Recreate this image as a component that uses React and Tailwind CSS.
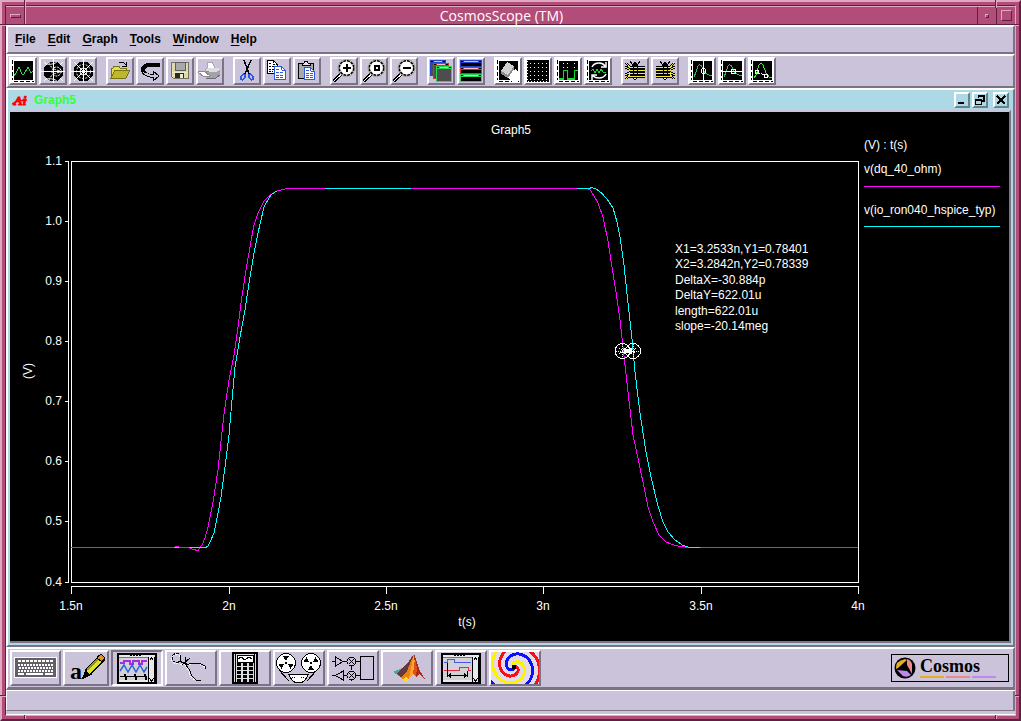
import clsx from 'clsx'

const sans = "font-['Liberation_Sans',Arial,sans-serif]"

const raised = 'border-2 border-t-white border-l-white border-r-[#7b7385] border-b-[#7b7385]'
const sunken = 'border-2 border-t-[#7b7385] border-l-[#7b7385] border-r-white border-b-white'

function Icon({ w = 24, h = 24, children }) {
  return (
    <svg width={w} height={h} viewBox={`0 0 ${w} ${h}`} fill="none" shapeRendering="crispEdges" aria-hidden="true">
      {children}
    </svg>
  )
}

function ScopeFrame({ children }) {
  return (
    <Icon>
      <rect width="24" height="24" fill="#fff" />
      <path d="M1.5 1V21" stroke="#000" strokeDasharray="4 2" />
      <path d="M3 22.5H23" stroke="#000" strokeDasharray="4 2" />
      <rect x="3" y="2" width="19" height="19" fill="#000" />
      {children}
    </Icon>
  )
}

function Polar({ dense }) {
  return (
    <Icon>
      <circle cx="12.5" cy="12.5" r="10" fill="#000" />
      <path d="M12.5 0V24M0 12.5H24" stroke="#fff" />
      {dense ? (
        <g shapeRendering="auto">
          <circle cx="12.500" cy="12.500" r="3.500" stroke="#fff" />
          <circle cx="12.500" cy="12.500" r="7" stroke="#fff" strokeDasharray="2 1.500" />
          <path d="M5 5L20 20M20 5L5 20" stroke="#fff" />
        </g>
      ) : (
        <g shapeRendering="auto">
          <circle cx="15.500" cy="12.500" r="4.500" stroke="#fff" strokeDasharray="2 1" />
          <path d="M5 5Q12 6 16 3M5 20Q12 19 16 22M8 3Q9 11 21 12M8 22Q9 14 21 13" stroke="#fff" strokeDasharray="3 1" />
        </g>
      )}
      <path d="M3 3L6 6M22 3L19 6M3 22L6 19M22 22L19 19" stroke="#fff" />
    </Icon>
  )
}

function Magnifier({ children }) {
  return (
    <Icon>
      <path d="M11 13L1.500 22.500" stroke="#000" strokeWidth="4" />
      <path d="M10 14.500L2 22" stroke="#fff" strokeWidth="1" />
      <g shapeRendering="auto">
        <circle cx="14.500" cy="9" r="8.500" fill="#fff" stroke="#a5a09a" />
        <circle cx="14.500" cy="9" r="7.200" fill="#fff" stroke="#000" strokeWidth="1.500" strokeDasharray="3 0.800" />
      </g>
      {children}
    </Icon>
  )
}

function MiniWindow({ x, y, w, h, color, fill }) {
  return (
    <g>
      <rect x={x} y={y} width={w} height={h} fill={color} />
      <path d={`M${x + 4} ${y + 1.5}H${x + w - 4}`} stroke="#fff" strokeOpacity="0.7" />
      <path d={`M${x + 1} ${y + 1.5}h2M${x + w - 3} ${y + 1.5}h2`} stroke="#000" />
      <rect x={x + 1} y={y + 3} width={w - 2} height={h - 4} fill={fill} />
    </g>
  )
}

function Bug({ flip }) {
  const fan = flip
    ? 'M17 8.500L21 4M17 10.500L22 8M17 13.500L22 16M17 15.500L21 20'
    : 'M7 8.500L3 4M7 10.500L2 8M7 13.500L2 16M7 15.500L3 20'
  const wires = flip ? 'M3 8.500H18M3 11.500H18M3 14.500H18M3 17.500H18' : 'M6 8.500H22M6 11.500H22M6 14.500H22M6 17.500H22'
  return (
    <Icon>
      <path d="M9 5L7 2M15 5L17 2M10 4H14" stroke="#000" />
      <ellipse cx="12" cy="12" rx="4" ry="9" fill="#000" />
      <rect x="11" y="18" width="2" height="2" fill="#fff" />
      <path d={wires} stroke="#000" strokeWidth="3" />
      <path d={fan} stroke="#000" strokeWidth="2.500" />
      <path d={wires} stroke="#f0e63c" />
      <path d={fan} stroke="#f0e63c" />
      <path d="M10.500 8V17M14.500 8V17" stroke="#000" strokeDasharray="1 2" />
    </Icon>
  )
}

const gridDots = [4, 8, 12, 16, 20]

const toolGroups = [
  [
    {
      label: 'New graph',
      icon: (
        <ScopeFrame>
          <path d="M3 17L5 14L8 8L11 15L13 15L17 8L20 14L22 12" stroke="#2fd35a" />
        </ScopeFrame>
      ),
    },
    { label: 'Smith chart', icon: <Polar /> },
    { label: 'Polar chart', icon: <Polar dense /> },
  ],
  [
    {
      label: 'Open',
      icon: (
        <Icon>
          <path d="M3 19V9H5L6 7H11L12 9H18V12" fill="#e3df4a" stroke="#777315" />
          <path d="M3 19L7 11H22L18 19Z" fill="#bdb92b" stroke="#777315" />
          <path d="M11 3H15L18 6M18 3V7H14" stroke="#000" />
        </Icon>
      ),
    },
    {
      label: 'Undo',
      icon: (
        <Icon>
          <path d="M22 4H10Q3 5 3 11Q4 17 11 18V14Q7 13 7 11Q8 8 12 8H22Z" fill="#000" />
          <path d="M4 13Q6 17 12 18H15V22L21 17L15 12V15H12" fill="#cbc3d9" stroke="#000" />
        </Icon>
      ),
    },
    {
      label: 'Save',
      icon: (
        <Icon>
          <path d="M3 3H20V19H5L3 17Z" fill="#dedab0" stroke="#75725f" />
          <rect x="7" y="3" width="10" height="8" fill="#a9a8aa" stroke="#5f5d5f" />
          <path d="M4 13H20M4 16H8" stroke="#efedc0" />
          <rect x="7" y="14" width="9" height="5" fill="#2a2a25" />
          <rect x="12" y="15" width="3" height="4" fill="#eceadb" />
        </Icon>
      ),
    },
    {
      label: 'Print',
      icon: (
        <Icon>
          <path d="M10 10L9 4L14 3L17 9" fill="#fff" stroke="#aaa6b0" />
          <path d="M8 9H20L22 11V16L18 19H9L7 15V11Z" fill="#a3a2a6" />
          <path d="M7 11L9 9H20L22 11L18 13H9Z" fill="#dddce0" />
          <path d="M8 19H18L22 16" stroke="#6e6a70" />
          <path d="M0 13L6 12L12 17L6 18Z" fill="#fff" stroke="#8b888f" />
          <rect x="8" y="12" width="3" height="1" fill="#36ba68" />
        </Icon>
      ),
    },
  ],
  [
    {
      label: 'Cut',
      icon: (
        <Icon>
          <path d="M9 1L14 15M16 1L10 15" stroke="#000" strokeWidth="1.500" />
          <ellipse cx="8" cy="18" rx="2" ry="3" transform="rotate(30 8 18)" stroke="#2c59e0" strokeWidth="1.500" />
          <ellipse cx="16" cy="18" rx="2" ry="3" transform="rotate(-30 16 18)" stroke="#2c59e0" strokeWidth="1.500" />
        </Icon>
      ),
    },
    {
      label: 'Copy',
      icon: (
        <Icon>
          <path d="M2.500 1.500H8.500L12.500 5.500V14.500H2.500Z" fill="#fff" stroke="#000" />
          <path d="M8.500 2V5.500H12M4 4.500H7M4 7.500H11M4 10.500H11M4 12.500H8" stroke="#000" strokeDasharray="2 1" />
          <path d="M9.500 7.500H16.500L20.500 11.500V20.500H9.500Z" fill="#fff" stroke="#2c59e0" />
          <path d="M16.500 8V11.500H20M11 10.500H15M11 13.500H19M11 16.500H19M11 18.500H19" stroke="#2c59e0" strokeDasharray="3 1" />
        </Icon>
      ),
    },
    {
      label: 'Paste',
      icon: (
        <Icon>
          <rect x="3.500" y="4.500" width="15" height="15" rx="1" fill="#aaa8ac" stroke="#000" />
          <path d="M7 6V4H9L10 2H12L13 4H15V6Z" fill="#e8e5e5" stroke="#000" />
          <path d="M9.500 8.500H15.500L19.500 12.500V20.500H9.500Z" fill="#fff" stroke="#2c59e0" />
          <path d="M15.500 9V12.500H19M11 11.500H14M11 14.500H18M11 16.500H18M11 18.500H18" stroke="#2c59e0" strokeDasharray="3 1" />
        </Icon>
      ),
    },
  ],
  [
    {
      label: 'Zoom in',
      icon: (
        <Magnifier>
          <path d="M15 5V13M11 9H19" stroke="#000" strokeWidth="2" />
        </Magnifier>
      ),
    },
    {
      label: 'Zoom fit',
      icon: (
        <Magnifier>
          <rect x="13" y="7" width="4" height="4" stroke="#000" strokeWidth="2" />
        </Magnifier>
      ),
    },
    {
      label: 'Zoom out',
      icon: (
        <Magnifier>
          <path d="M11 9H19" stroke="#000" strokeWidth="2" />
        </Magnifier>
      ),
    },
  ],
  [
    {
      label: 'Cascade',
      icon: (
        <Icon>
          <MiniWindow x={1} y={1} w={16} h={16} color="#2343c5" fill="#4d4d4d" />
          <MiniWindow x={4} y={4} w={16} h={16} color="#e22a2a" fill="#4d4d4d" />
          <MiniWindow x={7} y={7} w={16} h={16} color="#22dc50" fill="#4d4d4d" />
        </Icon>
      ),
    },
    {
      label: 'Tile',
      icon: (
        <Icon>
          <MiniWindow x={1} y={1} w={22} h={7} color="#2343c5" fill="#000" />
          <MiniWindow x={1} y={8} w={22} h={7} color="#e22a2a" fill="#000" />
          <MiniWindow x={1} y={15} w={22} h={8} color="#22dc50" fill="#000" />
        </Icon>
      ),
    },
  ],
  [
    {
      label: 'Clear graph',
      icon: (
        <ScopeFrame>
          <path d="M14 13L20 10L22 13V23H16L11 17Z" fill="#fff" />
          <path d="M5 12L11 3L18 7L12 16Z" fill="#cfcfcf" />
          <path d="M5 12L12 16V19L5 15ZM18 7V10L12 19V16Z" fill="#8c8c8c" />
        </ScopeFrame>
      ),
    },
    {
      label: 'Grid',
      icon: (
        <Icon>
          <rect width="24" height="24" fill="#fff" />
          <rect x="1" y="1" width="22" height="22" fill="#000" />
          {gridDots.map((y) => gridDots.map((x) => <rect key={`${x}-${y}`} x={x} y={y} width="1" height="1" fill="#fff" />))}
          <path d="M1.500 2V22M2 22.500H22" stroke="#fff" strokeDasharray="1 2" />
        </Icon>
      ),
    },
    {
      label: 'Digital',
      icon: (
        <ScopeFrame>
          <path d="M3 19.500H7.500V11.500H11.500V19.500H18.500V11.500H22" stroke="#10dd28" />
          <path d="M3 19.500H8M11 19.500H19" stroke="#10dd28" strokeWidth="2" />
          <path d="M7.500 4V9M11.500 4V9M18.500 4V9" stroke="#fff" strokeDasharray="1 3" />
        </ScopeFrame>
      ),
    },
    {
      label: 'Refresh',
      icon: (
        <ScopeFrame>
          <path
            d="M6 8Q8 4 13 4Q17 4 19 7M20 3V8H15M20 15Q18 19 13 19Q9 19 7 17M6 21V16H11"
            stroke="#fff"
            strokeWidth="1.500"
            shapeRendering="auto"
          />
          <path d="M5 12L7 10L9 14L11 10L13 14L15 10L17 13H20" stroke="#10dd28" />
        </ScopeFrame>
      ),
    },
  ],
  [
    { label: 'Bus', icon: <Bug /> },
    { label: 'Split bus', icon: <Bug flip /> },
  ],
  [
    {
      label: 'Vertical marker',
      icon: (
        <ScopeFrame>
          <path d="M4 18L6 13L8 7Q10 4 12 8L15 14L19 16H22" stroke="#22c84a" />
          <path d="M13.500 2V21" stroke="#fff" />
          <circle cx="13.500" cy="12" r="2.500" stroke="#fff" />
        </ScopeFrame>
      ),
    },
    {
      label: 'Horizontal marker',
      icon: (
        <ScopeFrame>
          <path d="M4 18L6 13L8 7Q10 4 12 8L15 14L19 16H22" stroke="#22c84a" />
          <path d="M3 12.500H22" stroke="#fff" />
          <circle cx="13.500" cy="12.500" r="2.500" stroke="#fff" />
        </ScopeFrame>
      ),
    },
    {
      label: 'Two point marker',
      icon: (
        <ScopeFrame>
          <path d="M4 19L6 16L9 6L11 4L13 6L16 14L19 18H22" stroke="#3ef028" />
          <path d="M7 13L16 17" stroke="#fff" strokeDasharray="1 1" />
          <circle cx="7" cy="13" r="2" stroke="#fff" />
          <circle cx="16" cy="17" r="2" stroke="#fff" />
        </ScopeFrame>
      ),
    },
  ],
]

// one arm of the swirl, r0 is its radius due left of the centre
function swirlArm(r0) {
  const pts = []
  for (let r = 1; r <= 36; r += 0.5) {
    const a = ((180 + (r0 - r) * 16) * Math.PI) / 180
    pts.push(`${(23 + r * Math.cos(a)).toFixed(1)},${(15 - r * Math.sin(a)).toFixed(1)}`)
  }
  return pts.join(' ')
}

function ScopeCase({ children }) {
  return (
    <>
      <rect x="5" y="2" width="38" height="29" fill="#e9e9ec" stroke="#000" strokeWidth="2" />
      <path d="M6 5.500H35" stroke="#777" />
      <path d="M17 3.500H28" stroke="#000" strokeDasharray="2 1" />
      <rect x="6" y="6" width="29" height="22" fill="#d2d2d6" />
      <path d="M35.500 5V30M41.500 5V30" stroke="#000" />
      <path d="M36.500 8.500L38.500 6L40.500 8.500M36.500 26.500L38.500 29L40.500 26.500" stroke="#000" />
      {children}
    </>
  )
}

function Reel({ cx, turn }) {
  return (
    <g>
      <circle cx={cx} cy="11" r="9.500" fill="#fff" stroke="#000" />
      <g transform={`rotate(${turn} ${cx} 11)`} fill="#000">
        <path d={`M${cx} 9L${cx - 3} 4H${cx + 3}Z`} />
        <path d={`M${cx} 9L${cx - 3} 4H${cx + 3}Z`} transform={`rotate(120 ${cx} 11)`} />
        <path d={`M${cx} 9L${cx - 3} 4H${cx + 3}Z`} transform={`rotate(240 ${cx} 11)`} />
      </g>
      <rect x={cx - 1} y="10" width="2" height="2" fill="#000" />
    </g>
  )
}

const apps = [
  {
    label: 'Command line',
    width: 'w-[51px]',
    w: 47,
    icon: (
      <>
        <rect x="2.500" y="5.500" width="42" height="20" fill="#626066" stroke="#fff" />
        <path d="M6 8.500H41" stroke="#fff" strokeWidth="2" strokeDasharray="3 1" />
        <path d="M6 12.500H41M7 15.500H41M6 18.500H41" stroke="#fff" strokeWidth="2" strokeDasharray="2 1" />
        <path d="M6 21.500H12M14 21.500H31M33 21.500H41" stroke="#fff" strokeWidth="2" />
      </>
    ),
  },
  {
    label: 'Draw',
    width: 'w-[46px]',
    w: 42,
    icon: (
      <>
        <text x="5" y="27" fill="#000" className="font-['Liberation_Serif',serif] text-[24px] font-bold">
          a
        </text>
        <path d="M18 26L21 18L34 4L39 8L26 22Z" fill="#dce02c" stroke="#000" strokeWidth="1.500" />
        <path d="M22 18L35 5" stroke="#8c9320" strokeWidth="2" />
        <path d="M18 26L21 19L25 22Z" fill="#000" />
        <path d="M32 6L36 2L40 6L37 10Z" fill="#df922a" stroke="#000" />
      </>
    ),
  },
  {
    label: 'Scope',
    width: 'w-[52px]',
    w: 48,
    active: true,
    icon: (
      <ScopeCase>
        <path d="M7 10.500H11V8.500H17V11.500H20V8.500H26V11.500H29V8.500H34" stroke="#a52be5" strokeWidth="2" />
        <path
          d="M7 19L11 13L15 20L19 13L23 20L27 13L31 20L34 15"
          stroke="#2864df"
          strokeWidth="1.500"
          shapeRendering="auto"
        />
        <path d="M7 24.500H11L12 22L13 28L14 24.500H21L22 22L23 28L24 24.500H31L32 22L33 28L34 24.500" stroke="#000" />
      </ScopeCase>
    ),
  },
  {
    label: 'Macro',
    width: 'w-[52px]',
    w: 48,
    icon: (
      <>
        <g stroke="#fff" strokeDasharray="3 1">
          <circle cx="9" cy="7" r="4.500" />
          <path d="M13 12H24L32 11L39 16M18 13L21 18L24 25L29 29" />
        </g>
        <circle cx="9.500" cy="6" r="4.500" stroke="#000" strokeDasharray="3 1" />
        <path d="M12 9L22 13M15 13L23 6M18 5V11M22 11H32L38 14L39 17" stroke="#000" />
        <path d="M18 12L22 17L25 24L29 28H34" stroke="#000" />
      </>
    ),
  },
  {
    label: 'Calculator',
    width: 'w-[52px]',
    w: 48,
    icon: (
      <>
        <rect x="12" y="1" width="24" height="30" fill="#dcdcdf" stroke="#000" strokeWidth="2" />
        <path d="M14.500 2V31M33.500 2V31" stroke="#000" />
        <rect x="16" y="3" width="16" height="7" fill="#fff" stroke="#000" />
        <path d="M17 7L20 5L24 8L28 5L31 7" stroke="#000" />
        {[12, 16, 20, 24, 28].map((y) => (
          <path key={y} d={`M16 ${y + 0.5}H20M22 ${y + 0.5}H26M28 ${y + 0.5}H32`} stroke="#000" strokeWidth="3" />
        ))}
      </>
    ),
  },
  {
    label: 'Measure',
    width: 'w-[52px]',
    w: 48,
    icon: (
      <>
        <path d="M4 18L14 29M42 18L32 29" stroke="#000" />
        <Reel cx={11} turn={0} />
        <Reel cx={36} turn={60} />
        <path d="M13.500 22.500H33.500L30 28L27 30.500H20L17 28Z" fill="#fff" stroke="#000" />
        <path d="M17 25.500H21M26 25.500H30" stroke="#000" strokeDasharray="1 1" />
      </>
    ),
  },
  {
    label: 'Schematic',
    width: 'w-[52px]',
    w: 48,
    icon: (
      <>
        <path d="M3 9.500H6M14 9.500H32M3 23.500H6M14 23.500H32M22.500 14V18" stroke="#000" />
        <path d="M6.500 5V14L14 9.500ZM14.500 19V28L6 23.500Z" fill="#cbc3d9" stroke="#000" />
        <circle cx="22.500" cy="9.500" r="4.500" fill="#cbc3d9" stroke="#000" />
        <circle cx="22.500" cy="23.500" r="4.500" fill="#cbc3d9" stroke="#000" />
        <path d="M20 7L25 12M25 7L20 12M20 21L25 26M25 21L20 26" stroke="#000" />
        <rect x="31.500" y="4.500" width="13" height="23" stroke="#000" />
      </>
    ),
  },
  {
    label: 'Matlab',
    width: 'w-[52px]',
    w: 48,
    icon: (
      <>
        <path d="M10 20L19 16L26 9L31 2L22 25L16 24Z" fill="#4fa79c" />
        <path d="M19 16L26 9L31 2L24 20L18 26L14 22Z" fill="#623b3e" />
        <path d="M31 2L24 19L18 26L23 31L30 22L34 20Z" fill="#ed7e1c" />
        <path d="M31 2L28 16L26 27L30 22L34 20L32 8Z" fill="#f6a92a" />
        <path d="M31 2L33 7L37 19L42 27L36 22L33 25Z" fill="#a82d1b" />
        <path d="M32 6L34 16L33 25L30 22Z" fill="#df501b" />
        <path d="M20 27L23 31L26 27L23 25Z" fill="#f5df2c" />
      </>
    ),
  },
  {
    label: 'Timing',
    width: 'w-[52px]',
    w: 48,
    icon: (
      <ScopeCase>
        <path d="M7 10.500H10V7.500H17V10.500H34" stroke="#4d55e6" />
        <path d="M7 18.500H22V15.500H31V18.500H34" stroke="#e8264a" />
        <path d="M10.500 11V25M30.500 19V25M11 23.500H30" stroke="#000" />
        <path d="M11 23.500L14 21V26ZM30 23.500L27 21V26Z" fill="#000" />
      </ScopeCase>
    ),
  },
  {
    label: 'Swirl',
    width: 'w-[52px]',
    w: 48,
    icon: (
      <>
        <rect width="48" height="32" fill="#e3dbe9" />
        <polyline points={swirlArm(21)} stroke="#fbf400" strokeWidth="3" />
        <polyline points={swirlArm(14)} stroke="#fb0d16" strokeWidth="3" />
        <polyline points={swirlArm(7)} stroke="#0b10ff" strokeWidth="3" />
        <circle cx="23" cy="15" r="2.500" fill="#000" />
      </>
    ),
  },
]

const menus = ['File', 'Edit', 'Graph', 'Tools', 'Window', 'Help']

const yTicks = [
  ['1.1', 161],
  ['1.0', 221],
  ['0.9', 281],
  ['0.8', 341],
  ['0.7', 401],
  ['0.6', 461],
  ['0.5', 521],
  ['0.4', 582],
]

const xTicks = [
  ['1.5n', 71],
  ['2n', 229],
  ['2.5n', 386],
  ['3n', 543],
  ['3.5n', 701],
  ['4n', 858],
]

const measurements = [
  ['X1=3.2533n,Y1=0.78401', 253],
  ['X2=3.2842n,Y2=0.78339', 268],
  ['DeltaX=-30.884p', 284],
  ['DeltaY=622.01u', 299],
  ['length=622.01u', 315],
  ['slope=-20.14meg', 330],
]

const dqTrace =
  '71,547.5 174,547.5 177,546.5 180,547.5 189,547.5 193,549.5 198,550.5 202,545 205,538 208,527 213,502 218,470 221,441 224,414 229,380 234,355 238,327 241,303 246,270 250,247 253.5,227 258,213 264,201 270,195 277,191 287,188.5 588,188.5 591,191 598,203 603,217 608,241 612,267 616,292 620,320 623,347 628,392 633,435 639,463 644,487 648,507 653,522 659,535 666,542 675,545.5 688,547.5 858,547.5'

const ioTrace =
  '189,547.5 206,547.5 208.5,545.5 214,533 218,513 221,497 225,467 229,435 232,400 235,367 240,337 245,310 249,283 254,253 258,233 264,207 269,198 272,194 277,191'

const ioFall =
  '577,188 589,188.5 592,187.5 597,189.5 602,193.5 607,199 613,208 617,222 620,237 624,265 628,303 632,339 635,372 640,413 646,452 651,477 658,506 663,522 668,532 675,540 683,545.5 688,547 700,547'

function Marker({ cx }) {
  return (
    <g stroke="#fff">
      <circle cx={cx} cy="351" r="7.500" />
      <path d={`M${cx - 7} 351H${cx + 7}M${cx} 344V358`} strokeDasharray="1 1" />
      <path d={`M${cx - 3} 348L${cx + 3} 354M${cx + 3} 348L${cx - 3} 354`} strokeDasharray="1 1" />
    </g>
  )
}

function Plot() {
  return (
    <svg viewBox="10 112 999 529" className={clsx('block w-full h-auto bg-black text-[12px]', sans)} fill="none" role="img">
      <g shapeRendering="crispEdges">
        <rect x="71.500" y="161.500" width="787" height="421" stroke="#fff" />
        <path d="M68.500 161V583M71 586.500H859" stroke="#fff" />
        {yTicks.map(([label, y]) => (
          <path key={label} d={`M65 ${y + 0.5}H69`} stroke="#fff" />
        ))}
        {xTicks.map(([label, x]) => (
          <path key={label} d={`M${x + 0.5} 586V594`} stroke="#fff" />
        ))}
        <polyline points={dqTrace} stroke="#ff00ff" />
        <polyline points={ioTrace} stroke="#00ffff" />
        <polyline points={ioFall} stroke="#00ffff" />
        <path d="M325 188.500H411M174 547.500H179" stroke="#00ffff" />
        <Marker cx={622.5} />
        <Marker cx={633} />
        <path d="M624 348H626V349H630V348H632V354H630V353H626V354H624Z" fill="#fff" />
        <path d="M864 186.500H1000" stroke="#ff00ff" />
        <path d="M864 226.500H1000" stroke="#00ffff" />
      </g>
      <g fill="#fff">
        <text x="511" y="134" textAnchor="middle">
          Graph5
        </text>
        {yTicks.map(([label, y]) => (
          <text key={label} x="62" y={y + 4} textAnchor="end">
            {label}
          </text>
        ))}
        {xTicks.map(([label, x]) => (
          <text key={label} x={x} y="610" textAnchor="middle">
            {label}
          </text>
        ))}
        <text x="467" y="626" textAnchor="middle">
          t(s)
        </text>
        <text transform="translate(32 371) rotate(-90)" textAnchor="middle">
          (V)
        </text>
        {measurements.map(([text, y]) => (
          <text key={text} x="675" y={y}>
            {text}
          </text>
        ))}
        <text x="864" y="149">
          (V) : t(s)
        </text>
        <text x="864" y="173">
          v(dq_40_ohm)
        </text>
        <text x="864" y="214">
          v(io_ron040_hspice_typ)
        </text>
      </g>
    </svg>
  )
}

function ChildButton({ label, children }) {
  return (
    <button
      type="button"
      aria-label={label}
      className="size-4 border-2 border-t-white border-l-white border-r-[#65848e] border-b-[#65848e] bg-[#add8e6]"
    >
      <svg width="12" height="12" viewBox="0 0 12 12" fill="none" stroke="#000" shapeRendering="crispEdges" aria-hidden="true">
        {children}
      </svg>
    </button>
  )
}

// resize notches on the frame
function FrameNotches() {
  return (
    <div className="pointer-events-none" aria-hidden="true">
      <span className="absolute left-[22px] -top-0.5 h-2 w-0.5 border-l border-[#5c2040] bg-[#dfa9c2]" />
      <span className="absolute right-[22px] -top-0.5 h-2 w-0.5 border-l border-[#5c2040] bg-[#dfa9c2]" />
      <span className="absolute left-[22px] bottom-0 h-1 w-0.5 border-l border-[#5c2040] bg-[#dfa9c2]" />
      <span className="absolute right-[22px] bottom-0 h-1 w-0.5 border-l border-[#5c2040] bg-[#dfa9c2]" />
      <span className="absolute -left-0.5 top-[22px] h-0.5 w-1.5 border-t border-[#5c2040] bg-[#dfa9c2]" />
      <span className="absolute right-0 top-[22px] h-0.5 w-1 border-t border-[#5c2040] bg-[#dfa9c2]" />
      <span className="absolute -left-0.5 bottom-[22px] h-0.5 w-1.5 border-t border-[#5c2040] bg-[#dfa9c2]" />
      <span className="absolute right-0 bottom-[22px] h-0.5 w-1 border-t border-[#5c2040] bg-[#dfa9c2]" />
    </div>
  )
}

function TitleBar() {
  const cell = 'flex w-[19px] items-center justify-center border-[#5c2040]'
  return (
    <header className="flex h-[19px] border-t border-b border-t-[#dfa9c2] border-b-[#5c2040] text-white">
      <button type="button" aria-label="Window menu" className={clsx(cell, 'border-r')}>
        <span className="h-1 w-[11px] border border-t-[#dfa9c2] border-l-[#dfa9c2] border-r-[#5c2040] border-b-[#5c2040]" />
      </button>
      <h1 className="flex-1 border-l border-[#dfa9c2] text-center font-['Open_Sans',sans-serif] text-[14px] leading-[18px]">
        CosmosScope (TM)
      </h1>
      <button type="button" aria-label="Minimize window" className={clsx(cell, 'border-l')}>
        <span className="size-1 border border-t-[#dfa9c2] border-l-[#dfa9c2] border-r-[#5c2040] border-b-[#5c2040]" />
      </button>
      <button type="button" aria-label="Maximize window" className={clsx(cell, 'border-l')}>
        <span className="size-[11px] border border-t-[#dfa9c2] border-l-[#dfa9c2] border-r-[#5c2040] border-b-[#5c2040]" />
      </button>
    </header>
  )
}

export default function App() {
  return (
    <div
      className={clsx(
        'relative flex min-h-screen flex-col border-2 border-t-[#dfa9c2] border-l-[#dfa9c2] border-r-[#5c2040] border-b-[#5c2040] bg-[#b24d7a] p-[3px] text-black',
        sans,
      )}
    >
      <div className="flex flex-1 flex-col border border-t-[#5c2040] border-l-[#5c2040] border-r-[#dfa9c2] border-b-[#dfa9c2]">
        <TitleBar />

        <nav className={clsx('flex h-[29px] items-center gap-3 bg-[#cbc3d9] px-[7px] pb-0.5', raised)}>
          {menus.map((name) => (
            <button key={name} type="button" className="text-[12px] leading-4 font-bold">
              <span className="underline underline-offset-2">{name[0]}</span>
              {name.slice(1)}
            </button>
          ))}
        </nav>

        <div className={clsx('flex gap-[9px] bg-[#cbc3d9] p-px', raised)} role="toolbar">
          {toolGroups.map((group) => (
            <div key={group[0].label} className="flex gap-0.5">
              {group.map((tool) => (
                <button key={tool.label} type="button" aria-label={tool.label} className={clsx('size-7 bg-[#cbc3d9]', raised)}>
                  {tool.icon}
                </button>
              ))}
            </div>
          ))}
        </div>

        <section className={clsx('bg-[#add8e6] px-0.5 pb-0.5', raised)}>
          <div className="flex h-5 items-center gap-1 pr-0.5 pl-0.5">
            <svg width="18" height="14" viewBox="0 0 18 14" aria-hidden="true">
              <text x="2" y="12" fill="#f00" stroke="#f00" className="font-['Liberation_Serif',serif] text-[13px] font-bold italic">
                Ai
              </text>
              <path d="M0 11L5 8L15 7" stroke="#f00" strokeWidth="1.500" fill="none" />
            </svg>
            <h2 className="flex-1 text-[12px] leading-4 font-bold text-[#35ff35]">Graph5</h2>
            <div className="flex gap-0.5">
              <ChildButton label="Minimize">
                <path d="M2 9H8" strokeWidth="2" />
              </ChildButton>
              <ChildButton label="Restore">
                <path d="M4 2H10V7H8M1 6H7" strokeWidth="1.500" />
                <path d="M4.500 1V4M1.500 5.500H7.500V10.500H1.500Z" />
              </ChildButton>
              <span className="w-px" />
              <ChildButton label="Close">
                <path d="M2 2L10 10M10 2L2 10" strokeWidth="1.500" />
              </ChildButton>
            </div>
          </div>
          <div className="border-t-2 border-r-2 border-b-2 border-t-[#cbc3d9] border-r-[#7b7385] border-b-[#7b7385]">
            <Plot />
          </div>
        </section>

        <div className="flex items-center justify-between border-2 border-b-[3px] border-t-white border-l-white border-r-[#7b7385] border-b-[#7b7385] bg-[#cbc3d9] py-px pr-1 pl-0.5">
          <div className="flex gap-0.5" role="toolbar">
            {apps.map((app) => (
              <button
                key={app.label}
                type="button"
                aria-label={app.label}
                className={clsx('h-9 bg-[#cbc3d9]', app.width, app.active ? sunken : raised)}
              >
                <Icon w={app.w} h={32}>
                  {app.icon}
                </Icon>
              </button>
            ))}
          </div>
          <div className="flex h-7 w-[118px] items-center gap-1 border border-black pl-0.5">
            <svg width="22" height="22" viewBox="0 0 22 22" aria-hidden="true">
              <circle cx="11" cy="11" r="10.500" fill="#000" />
              <path d="M2 12Q1 4 11 2L13 3L4 11Z" fill="#e9ad22" />
              <path d="M13 2Q17 3 18 7V17L13 8Z" fill="#ea8a8a" />
              <path d="M3 13L13 14L17 18Q13 21 9 19Z" fill="#c088ea" />
            </svg>
            <div className="font-['Liberation_Serif',serif] text-[18px] leading-4 font-bold">
              Cosmos
              <div className="flex gap-0.5 pt-0.5">
                <span className="h-0.5 w-6 bg-[#e9ad22]" />
                <span className="h-0.5 w-6 bg-[#ea8a8a]" />
                <span className="h-0.5 w-6 bg-[#c088ea]" />
              </div>
            </div>
          </div>
        </div>

        <footer className="flex-1 border-t border-b border-b-white border-t-white bg-[#cbc3d9]">
          <div className="h-full min-h-5 border-r-2 border-b border-l border-l-white border-r-[#7b7385] border-b-[#7b7385]" />
        </footer>
      </div>
      <FrameNotches />
    </div>
  )
}
